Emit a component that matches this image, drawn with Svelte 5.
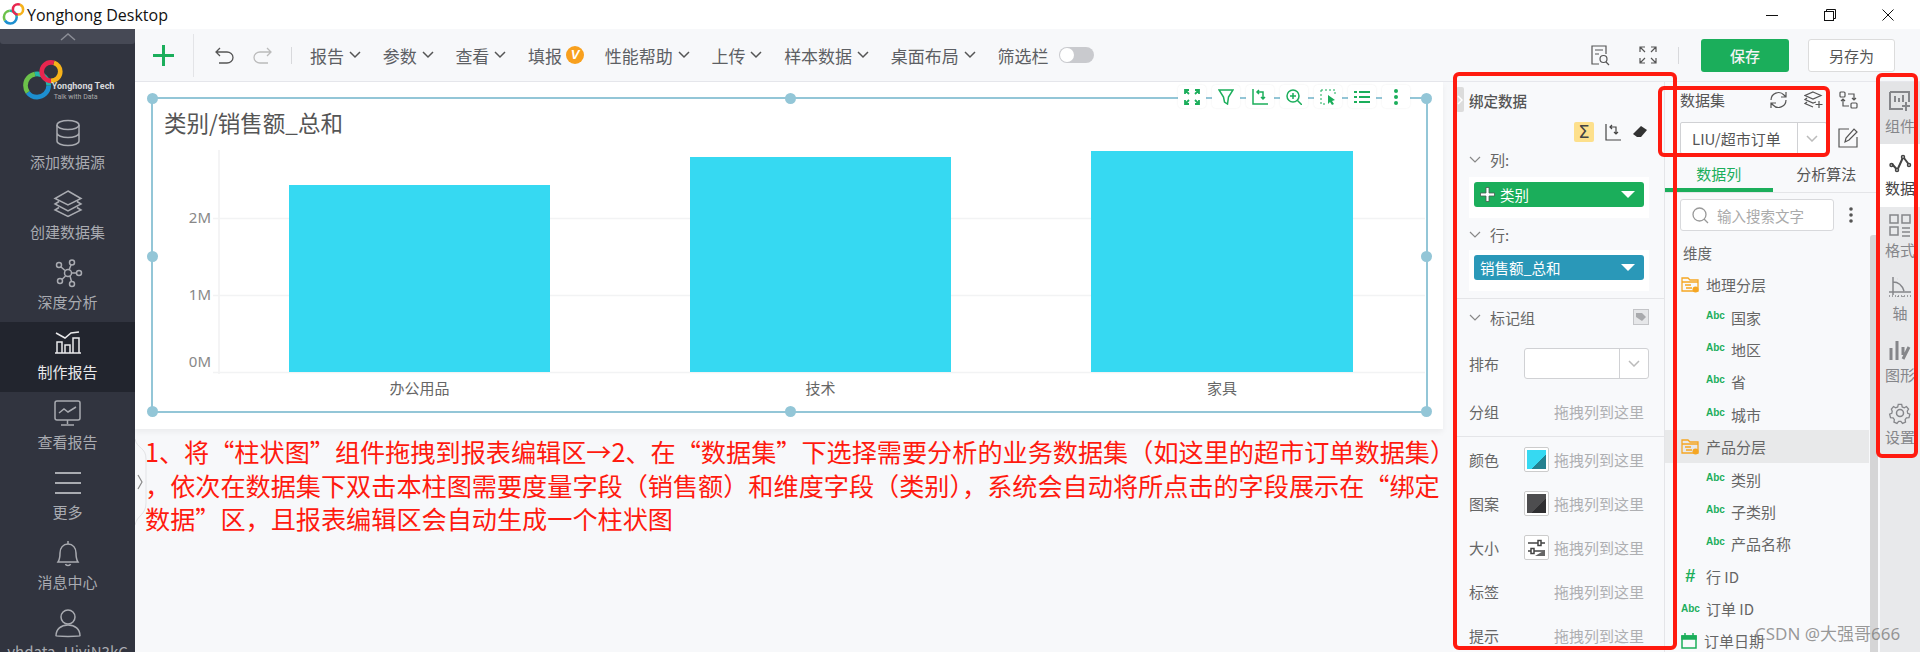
<script lang="ts">
  const ICONS: Record<string, string> = {
    db: '<ellipse cx="13" cy="6" rx="11" ry="4.5"/><path d="M2 6v16c0 2.5 5 4.5 11 4.5s11-2 11-4.5V6M2 14c0 2.5 5 4.5 11 4.5S24 16.5 24 14"/>',
    layers: '<path d="M14 2 27 9.5 14 16 1 9.5zM5 12.5 1 15l13 7 13-7-4-2.5M5 18.5 1 21l13 6.5L27 21l-4-2.5"/>',
    graph: '<circle cx="14" cy="14" r="3.5"/><circle cx="5" cy="6" r="2.5"/><circle cx="18" cy="3.5" r="2.5"/><circle cx="25" cy="14" r="2.5"/><circle cx="6" cy="22" r="2.5"/><circle cx="18" cy="25" r="2.5"/><path d="m7 8 4 3.5M17 6l-2 5M22.5 14H18M8 20.5l3.5-3.5M17.5 22.5 16 17"/>',
    report: '<path d="M1 23h26M3 23V12h5v11M11 23V15h5v8M19 23V8h6v15M2 3l9 5 6-5 8-1"/>',
    monitor: '<rect x="1" y="1" width="25" height="19" rx="2"/><path d="M5 13l5-4 4 3 8-5M13.5 20v4M7 25h13"/>',
    menu: '<path d="M1 2h26M1 12h26M1 22h26" stroke-width="2"/>',
    bell: '<path d="M4 22c2-3 2-5 2-9 0-5 3-9 8-9s8 4 8 9c0 4 0 6 2 9zM11.5 24c.5 2 4.5 2 5 0M14 4V1"/>',
    user: '<circle cx="14" cy="8" r="7"/><path d="M2 27c0-7 5-11 12-11s12 4 12 11c0 .5-24 .5-24 0z"/>',
    widget: '<path d="M6 5v6M10 7v4M14 4v7M1 1h19v10M14 18H1V1M17 11v9M13 15h8" stroke-width="2"/>',
    trend: '<circle cx="2.5" cy="12" r="1.5"/><circle cx="8" cy="17" r="1.5"/><circle cx="14" cy="4" r="1.5"/><circle cx="20" cy="12" r="1.5"/><path d="m3 11 4.5 5M9 15.5 13.5 5.5M15 5l4.5 6" stroke-width="2"/>',
    grid: '<rect x="1" y="1" width="8" height="8"/><rect x="13" y="1" width="8" height="8"/><rect x="1" y="13" width="8" height="8"/><path d="M13 14h8M13 18h8M13 22h8"/>',
    axis: '<path d="M4 0v18M0 15h22M4 5c5 0 9 3 11 9"/><path d="M0 19h22M8 2h.1M14 19v2M9 19v2" stroke-dasharray="1 2"/>',
    shape: '<path d="M2 8v12M8 1v19M14 7v8M20 7l-6 12" stroke-width="3"/>',
    gear: '<circle cx="11" cy="11" r="3.5"/><path d="M9 1h4l.6 3 2.4 1 2.5-1.5 2.5 3-1.5 2.5.5 2.5 2.5 1-1 4-3 .1-1.5 2.1.5 3-3.5 1.5-2-2.5h-2.5l-2 2.5-3.5-1.5.5-3-1.5-2.1-3-.1-1-4 2.5-1 .5-2.5L1 6.5l2.5-3L6 5l2.4-1z" transform="translate(1.5 1.5) scale(.86)"/>'
  };

  const navItems = [
    { label: "添加数据源", icon: "db", w: 26, h: 28 },
    { label: "创建数据集", icon: "layers", w: 28, h: 28 },
    { label: "深度分析", icon: "graph", w: 28, h: 28 },
    { label: "制作报告", icon: "report", w: 28, h: 26, active: true },
    { label: "查看报告", icon: "monitor", w: 27, h: 26 },
    { label: "更多", icon: "menu", w: 28, h: 24 },
    { label: "消息中心", icon: "bell", w: 28, h: 27 },
    { label: "yhdata_UiyiN3kC", icon: "user", w: 28, h: 28 }
  ];

  const menus = [
    { label: "报告", arrow: true },
    { label: "参数", arrow: true },
    { label: "查看", arrow: true },
    { label: "填报", badge: true },
    { label: "性能帮助", arrow: true },
    { label: "上传", arrow: true },
    { label: "样本数据", arrow: true },
    { label: "桌面布局", arrow: true }
  ];

  const railItems = [
    { label: "组件", icon: "widget", w: 22, h: 21, cls: "tinted" },
    { label: "数据", icon: "trend", w: 22, h: 20, cls: "on" },
    { label: "格式", icon: "grid", w: 22, h: 23 },
    { label: "轴", icon: "axis", w: 22, h: 22 },
    { label: "图形", icon: "shape", w: 22, h: 22 },
    { label: "设置", icon: "gear", w: 22, h: 22 }
  ];

  const fields = [
    { kind: "folder", name: "地理分层" },
    { kind: "abc", name: "国家" },
    { kind: "abc", name: "地区" },
    { kind: "abc", name: "省" },
    { kind: "abc", name: "城市" },
    { kind: "folder", name: "产品分层", hover: true },
    { kind: "abc", name: "类别" },
    { kind: "abc", name: "子类别" },
    { kind: "abc", name: "产品名称" },
    { kind: "hash", name: "行 ID" },
    { kind: "abc-top", name: "订单 ID" },
    { kind: "date", name: "订单日期" }
  ];

  // chart coords: plot bottom is y=226
  const bars = [
    { label: "办公用品", x: 136, w: 261, top: 39 },
    { label: "技术", x: 537, w: 261, top: 11 },
    { label: "家具", x: 938, w: 262, top: 5 }
  ];
  const ticks = [
    { label: "2M", y: 72, ty: 77 },
    { label: "1M", y: 149, ty: 154 },
    { label: "0M", y: 226, ty: 221 }
  ];
</script>

{#snippet icon(name: string, w: number, h: number)}
  <svg class="ico" width={w} height={h} viewBox="0 0 {w} {h}">{@html ICONS[name]}</svg>
{/snippet}

{#snippet rings(scale: number)}
  <svg width={36 * scale} height={36 * scale} viewBox="0 0 36 36" fill="none" stroke-width="4">
    <g transform="translate(13 22)">
      <circle r="10" stroke="#1d8fd0" pathLength="100" stroke-dasharray="40 60" />
      <circle r="10" stroke="#6cc24a" pathLength="100" stroke-dasharray="32 68" stroke-dashoffset="-40" />
      <circle r="10" stroke="#23b7a8" pathLength="100" stroke-dasharray="28 72" stroke-dashoffset="-72" />
    </g>
    <g transform="translate(25 10)">
      <circle r="8" stroke="#f6b21a" pathLength="100" stroke-dasharray="45 55" stroke-dashoffset="20" />
      <circle r="8" stroke="#e8264f" pathLength="100" stroke-dasharray="55 45" stroke-dashoffset="-25" />
    </g>
  </svg>
{/snippet}

{#snippet chevron(color: string)}
  <svg width="12" height="7" viewBox="0 0 12 7" fill="none" stroke={color} stroke-width="1.2"><path d="m1 1 5 5 5-5" /></svg>
{/snippet}

{#snippet dropRow(label: string, swatch = "")}
  <div class="drop-row">
    <span class="drop-label">{label}</span>
    {#if swatch}
      <span class="swatch">
        {#if swatch === "size"}
          <svg width="19" height="19" viewBox="0 0 19 19" fill="none" stroke="#444" stroke-width="1.5">
            <path d="M1 5h17M1 13h17" /><rect x="11" y="2.5" width="3" height="5" fill="#fff" /><rect x="4" y="10.5" width="3" height="5" fill="#fff" />
            <path d="M8 18l10-6v6z" fill="#666" stroke="none" />
          </svg>
        {:else}
          <span class="fill {swatch}"></span>
        {/if}
      </span>
    {/if}
    <span class="drop-hint">拖拽列到这里</span>
  </div>
{/snippet}

<div class="app">
  <header class="titlebar">
    {@render rings(0.64)}
    <span class="app-name">Yonghong Desktop</span>
    <div class="win-btns">
      <svg width="12" height="12" viewBox="0 0 12 12" fill="none" stroke="#111"><path d="M0 6.5h12" /></svg>
      <svg width="12" height="12" viewBox="0 0 12 12" fill="none" stroke="#111"><rect x=".5" y="2.5" width="9" height="9" /><path d="M2.5 2.5v-2h9v9h-2" /></svg>
      <svg width="12" height="12" viewBox="0 0 12 12" fill="none" stroke="#111"><path d="m.5.5 11 11M11.5.5l-11 11" /></svg>
    </div>
  </header>

  <div class="body">
    <nav class="sidebar">
      <div class="scroll-up">
        <svg width="16" height="8" viewBox="0 0 16 8" fill="none" stroke="#8b8d96" stroke-width="1.5"><path d="m1 7 7-6 7 6" /></svg>
      </div>
      <div class="brand">
        {@render rings(1.16)}
        <div class="brand-text">
          <b>Yonghong Tech</b>
          <small>Talk with Data</small>
        </div>
      </div>
      {#each navItems as item}
        <div class="nav-item" class:active={item.active}>
          {@render icon(item.icon, item.w, item.h)}
          <span>{item.label}</span>
        </div>
      {/each}
    </nav>

    <div class="main">
      <div class="toolbar">
        <svg class="plus" width="21" height="21" viewBox="0 0 21 21" fill="#1bae5b"><path d="M9 0h3v9h9v3h-9v9H9v-9H0V9h9z" /></svg>
        <span class="sep tall"></span>
        <svg class="undo" width="19" height="17" viewBox="0 0 19 17" fill="none" stroke="#555" stroke-width="1.3"><path d="M5 1 1 5l4 4M1 5h11c3 0 6 2 6 5.5S15 16 12 16H4" /></svg>
        <svg class="redo" width="19" height="17" viewBox="0 0 19 17" fill="none" stroke="#bbb" stroke-width="1.3"><path d="m14 1 4 4-4 4M18 5H7C4 5 1 7 1 10.5S4 16 7 16h8" /></svg>
        <span class="sep"></span>
        <div class="menus">
          {#each menus as m}
            <span class="menu">
              {m.label}
              {#if m.arrow}
                <svg width="14" height="8" viewBox="0 0 14 8" fill="none" stroke="#555" stroke-width="1.5"><path d="m2 1 5 5 5-5" /></svg>
              {/if}
              {#if m.badge}<i class="v-badge">V</i>{/if}
            </span>
          {/each}
          <span class="menu">筛选栏<span class="toggle"></span></span>
        </div>
        <div class="tool-right">
          <svg width="22" height="22" viewBox="0 0 22 22" fill="none" stroke="#555" stroke-width="1.2"><path d="M17 10V2H3v18h7M6 6h8M6 10h4" /><circle cx="14.5" cy="15" r="3.5" /><path d="m17 18 3 3" /></svg>
          <svg width="18" height="18" viewBox="0 0 18 18" fill="none" stroke="#555" stroke-width="1.2"><path d="M1 6V1h5M12 1h5v5M1 12v5h5M17 12v5h-5M1 1l5 5M17 1l-5 5M1 17l5-5M17 17l-5-5" /></svg>
          <span class="sep"></span>
          <button class="btn-save">保存</button>
          <button class="btn-saveas">另存为</button>
        </div>
      </div>

      <div class="workspace">
        <div class="canvas-col">
          <div class="canvas">
            <div class="widget">
              <h2>类别/销售额_总和</h2>
              <svg class="chart" width="1273" height="260" viewBox="0 0 1273 260">
                <path d="M66 4v224" stroke="#f0f1f2" stroke-width="1.5" />
                {#each ticks as t}
                  <path d="M60 {t.y + 0.5}H1272" stroke="#f2f3f4" stroke-width="1.5" />
                  <text x="58" y={t.ty} text-anchor="end" class="tick">{t.label}</text>
                {/each}
                {#each bars as b}
                  <rect x={b.x} y={b.top} width={b.w} height={226 - b.top} fill="#36d9f2" />
                  <text x={b.x + b.w / 2} y="248" text-anchor="middle" class="cat">{b.label}</text>
                {/each}
              </svg>
              <span class="handle tl"></span><span class="handle tc"></span><span class="handle tr"></span>
              <span class="handle ml"></span><span class="handle mr"></span>
              <span class="handle bl"></span><span class="handle bc"></span><span class="handle br"></span>

              <div class="chart-tools">
                <span><svg width="16" height="16" viewBox="0 0 16 16" fill="none" stroke="#1bae5b" stroke-width="1.8"><path d="M1 5V1h4M11 1h4v4M1 11v4h4M15 11v4h-4M2 2l3 3M14 2l-3 3M2 14l3-3M14 14l-3-3" /></svg></span>
                <span><svg width="16" height="16" viewBox="0 0 16 16" fill="none" stroke="#1bae5b" stroke-width="1.5"><path d="M1 1h14l-4.5 7-1 7-3-2-1-5z" /></svg></span>
                <span><svg width="16" height="16" viewBox="0 0 16 16" fill="none" stroke="#1bae5b" stroke-width="1.5"><path d="M1 0v15h15M5 3h6v7M9 8l2 2 2-2M7 1 5 3l2 2" /></svg></span>
                <span><svg width="16" height="16" viewBox="0 0 16 16" fill="none" stroke="#1bae5b" stroke-width="1.5"><circle cx="7" cy="7" r="6" /><path d="M4 7h6M7 4v6M11.5 11.5 16 16" /></svg></span>
                <span><svg width="16" height="16" viewBox="0 0 16 16" fill="none"><path d="M1 1h14v6M1 1v14h6" stroke="#1bae5b" stroke-dasharray="2 2" /><path d="m8 6 7 5-3 1 2 3-2 1-2-3-2 2z" fill="#1bae5b" /></svg></span>
                <span><svg width="16" height="12" viewBox="0 0 16 12" fill="none" stroke="#1bae5b" stroke-width="2"><path d="M0 1h3M5 1h11M0 6h3M5 6h11M0 11h3M5 11h11" /></svg></span>
                <span><svg width="6" height="16" viewBox="0 0 6 16" fill="#1bae5b"><circle cx="3" cy="2" r="2" /><circle cx="3" cy="8" r="2" /><circle cx="3" cy="14" r="2" /></svg></span>
              </div>
            </div>
          </div>
          <p class="note">
            1、将“柱状图”组件拖拽到报表编辑区→2、在“数据集”下选择需要分析的业务数据集（如这里的超市订单数据集）<br />
            ，依次在数据集下双击本柱图需要度量字段（销售额）和维度字段（类别），系统会自动将所点击的字段展示在“绑定<br />
            数据”区，且报表编辑区会自动生成一个柱状图
          </p>
          <svg class="side-tab" width="12" height="86" viewBox="0 0 12 86" fill="none">
            <path d="M0 0c2 10 11 8 11 20v44C11 76 2 76 0 86" stroke="#e2e3e6" />
            <path d="m3 36 4 7-4 7" stroke="#888" stroke-width="1.2" />
          </svg>
        </div>

        <aside class="bind-panel">
          <div class="bind-head">
            <span class="grab"><svg width="6" height="10" viewBox="0 0 6 10" fill="none" stroke="#fff" stroke-width="1.5"><path d="m1 1 4 4-4 4" /></svg></span>
            <b>绑定数据</b>
          </div>
          <div class="bind-tools">
            <span class="sigma">Σ</span>
            <svg width="16" height="17" viewBox="0 0 16 17" fill="none" stroke="#444" stroke-width="1.2"><path d="M1 0v16h15M5 3h6v7M9 8l2 2 2-2M7 1 5 3l2 2" /></svg>
            <svg width="15" height="12" viewBox="0 0 15 12" fill="#333"><path d="M9 0l6 4-6 7H5L1 8z" /></svg>
          </div>
          <div class="section-label">{@render chevron("#888")}列:</div>
          <div class="pill-box">
            <div class="pill green">
              <svg class="pill-plus" width="15" height="15" viewBox="0 0 15 15" fill="#fff" stroke="#4a5a50" stroke-width=".8"><path d="M6 .5h3v5.500h5.500v3H9v5.500H6V9H.5V6H6z" /></svg>
              类别<i></i>
            </div>
          </div>
          <div class="section-label next">{@render chevron("#888")}行:</div>
          <div class="pill-box"><div class="pill blue">销售额_总和<i></i></div></div>
          <hr />
          <div class="mark-head">
            {@render chevron("#888")}
            标记组
            <svg class="tag" width="16" height="16" viewBox="0 0 16 16"><rect x=".5" y=".5" width="15" height="15" fill="#e6e7e9" stroke="#c4c5c8" /><path d="M3 4h6l4 4-4 4-6-4z" fill="#a9aaad" /></svg>
          </div>
          <div class="layout-row">
            <span class="drop-label">排布</span>
            <span class="select"><span></span><svg width="12" height="7" viewBox="0 0 12 7" fill="none" stroke="#bbb" stroke-width="1.5"><path d="m1 1 5 5 5-5" /></svg></span>
          </div>
          {@render dropRow("分组")}
          <hr class="tight" />
          {@render dropRow("颜色", "cyan")}
          {@render dropRow("图案", "dark")}
          {@render dropRow("大小", "size")}
          {@render dropRow("标签")}
          {@render dropRow("提示")}
        </aside>

        <section class="data-panel">
          <div class="ds-head">
            数据集
            <span class="ds-icons">
              <svg width="19" height="18" viewBox="0 0 19 18" fill="none" stroke="#555" stroke-width="1.2"><path d="M2 9a7.5 7.5 0 0 1 13-5l2 2M17 1v5h-5M17 9a7.5 7.5 0 0 1-13 5l-2-2M2 17v-5h5" /></svg>
              <svg width="19" height="18" viewBox="0 0 19 18" fill="none" stroke="#555" stroke-width="1.2"><path d="M9 1l8 3.5L9 8 1 4.5zM3 7 1 8.5 9 12l3-1M3 11l-2 1.5L9 16M15 10v7M11.5 13.5h7" /></svg>
              <svg width="19" height="18" viewBox="0 0 19 18" fill="none" stroke="#555" stroke-width="1.2"><rect x="1" y="1" width="5" height="5" rx="1" /><rect x="12" y="12" width="6" height="5" rx="1" /><path d="M9 3h6v6M13 7l2 2 2-2M10 15H4V8M2 10l2-2 2 2" /></svg>
            </span>
          </div>
          <div class="ds-select-row">
            <span class="select ds"><span>LIU/超市订单</span><svg width="12" height="7" viewBox="0 0 12 7" fill="none" stroke="#bbb" stroke-width="1.5"><path d="m1 1 5 5 5-5" /></svg></span>
            <svg width="20" height="20" viewBox="0 0 20 20" fill="none" stroke="#555" stroke-width="1.2"><path d="M11 1H1v18h18V9M7 14l1-4 8-9 3 3-8 8z" /></svg>
          </div>
          <div class="tabs"><span class="tab sel">数据列</span><span class="tab">分析算法</span></div>
          <div class="search-row">
            <span class="search">
              <svg width="17" height="17" viewBox="0 0 17 17" fill="none" stroke="#999" stroke-width="1.3"><circle cx="7.5" cy="7.5" r="6.5" /><path d="m12 12 4 4" /></svg>
              输入搜索文字
            </span>
            <svg width="4" height="16" viewBox="0 0 4 16" fill="#555"><circle cx="2" cy="2" r="1.8" /><circle cx="2" cy="8" r="1.8" /><circle cx="2" cy="14" r="1.8" /></svg>
          </div>
          <div class="dim-title">维度</div>
          <div class="field-list">
            {#each fields as f}
              <div class="field k-{f.kind}" class:hover={f.hover}>
                {#if f.kind === "folder"}
                  <svg width="18" height="16" viewBox="0 0 18 16" fill="none" stroke="#f5a623" stroke-width="1.3"><path d="M1 14V1h6l2 2h8v11zM1 5h16M4 8h6M5 11h6" /><circle cx="14.5" cy="12.5" r="3" fill="#f5a623" stroke="none" /></svg>
                {:else if f.kind === "abc" || f.kind === "abc-top"}
                  <b class="abc">Abc</b>
                {:else if f.kind === "hash"}
                  <b class="hash">#</b>
                {:else}
                  <svg width="16" height="16" viewBox="0 0 16 16" fill="none" stroke="#1bae5b" stroke-width="1.5"><path d="M1 3h14v12H1z" /><path d="M1 3h14v3H1zM4 0v3M12 0v3" fill="#1bae5b" /></svg>
                {/if}
                <span>{f.name}</span>
              </div>
            {/each}
          </div>
          <span class="scrollbar"></span>
        </section>

        <div class="rail">
          {#each railItems as r}
            <div class="rail-item {r.cls ?? ''}">
              {@render icon(r.icon, r.w, r.h)}
              <span>{r.label}</span>
            </div>
          {/each}
        </div>
      </div>
    </div>
  </div>

  <!-- annotations drawn over the screenshot -->
  <span class="mark m1"></span>
  <span class="mark m2"></span>
  <span class="mark m3"></span>
  <span class="watermark">CSDN @大强哥666</span>
</div>

<style>
  :global(body) {
    margin: 0;
    background: #fff;
  }

  .app {
    position: relative;
    width: 1920px;
    height: 652px;
    overflow: hidden;
    display: flex;
    flex-direction: column;
    font-family: "Noto Sans CJK SC", "Noto Sans", sans-serif;
    color: #555;
  }

  .titlebar {
    flex: none;
    height: 29px;
    display: flex;
    align-items: center;
    padding-left: 2px;
    gap: 2px;
    background: #fff;
  }
  .app-name {
    font-family: "Open Sans", sans-serif;
    font-size: 16px;
    color: #111;
  }
  .win-btns {
    margin-left: auto;
    display: flex;
    gap: 46px;
    padding-right: 26px;
  }

  .body {
    flex: 1;
    min-height: 0;
    display: flex;
  }

  .ico {
    fill: none;
    stroke: currentColor;
    stroke-width: 1.5;
    overflow: visible;
  }

  /* Left nav */
  .sidebar {
    flex: none;
    width: 135px;
    background: #31343f;
    color: #a9abb1;
    display: flex;
    flex-direction: column;
    overflow: hidden;
  }
  .scroll-up {
    height: 15px;
    flex: none;
    background: #464955;
    border-radius: 0 0 3px 3px;
    display: flex;
    justify-content: center;
    align-items: center;
  }
  .brand {
    height: 68px;
    flex: none;
    display: flex;
    align-items: center;
    padding: 6px 0 0 22px;
    box-sizing: border-box;
  }
  .brand-text {
    display: flex;
    flex-direction: column;
    margin: 22px 0 0 -12px;
    color: #d8d9dc;
    line-height: 11px;
  }
  .brand-text b {
    font-family: "Roboto", sans-serif;
    font-size: 9px;
    white-space: nowrap;
  }
  .brand-text small {
    font-family: "Roboto", sans-serif;
    font-size: 7px;
    color: #aaa;
    margin-left: 2px;
  }
  .nav-item {
    flex: none;
    height: 70px;
    box-sizing: border-box;
    display: grid;
    grid-template-rows: 28px 22px;
    gap: 4px;
    justify-items: center;
    align-items: center;
    padding-top: 7px;
  }
  .nav-item span {
    font-size: 15px;
    line-height: 22px;
    white-space: nowrap;
  }
  .nav-item.active {
    background: #22252e;
    color: #e9e9eb;
  }

  .main {
    flex: 1;
    min-width: 0;
    display: flex;
    flex-direction: column;
  }

  /* Toolbar */
  .toolbar {
    flex: none;
    height: 53px;
    box-sizing: border-box;
    display: flex;
    align-items: center;
    background: #f7f8fa;
    border-bottom: 1px solid #e6e7ec;
    padding-left: 18px;
  }
  .sep {
    width: 1px;
    height: 17px;
    background: #d8d9dc;
    flex: none;
  }
  .sep.tall {
    height: 43px;
    margin-left: 19px;
    background: #e3e4e7;
  }
  .undo {
    margin-left: 21px;
  }
  .redo {
    margin-left: 19px;
  }
  .redo + .sep {
    margin-left: 19px;
  }
  .menus {
    display: flex;
    align-items: center;
    gap: 20.7px;
    margin-left: 18px;
  }
  .menu {
    display: flex;
    align-items: center;
    gap: 4px;
    font-size: 17px;
    color: #5d5f64;
    white-space: nowrap;
  }
  .v-badge {
    width: 18px;
    height: 18px;
    border-radius: 50%;
    background: #f8a01e;
    color: #fff;
    font: italic 700 13px/18px "Liberation Sans", sans-serif;
    text-align: center;
  }
  .toggle {
    position: relative;
    width: 35px;
    height: 16px;
    margin-left: 6px;
    border-radius: 8px;
    background: #c9cace;
  }
  .toggle::before {
    content: "";
    position: absolute;
    left: 1px;
    top: 1px;
    width: 14px;
    height: 14px;
    border-radius: 50%;
    background: #fff;
  }
  .tool-right {
    margin-left: auto;
    display: flex;
    align-items: center;
    padding-right: 25px;
  }
  .tool-right > svg:nth-child(2) {
    margin-left: 28px;
  }
  .tool-right .sep {
    margin: 0 22px 0 21px;
  }
  .btn-save,
  .btn-saveas {
    height: 33px;
    border-radius: 3px;
    font-family: inherit;
    font-size: 15px;
    padding: 0;
  }
  .btn-save {
    width: 88px;
    background: #1bae5b;
    border: 0;
    color: #f3f3f3;
    font-weight: 500;
  }
  .btn-saveas {
    width: 87px;
    margin-left: 19px;
    background: #fff;
    border: 1px solid #dcdcdc;
    color: #555;
  }

  .workspace {
    flex: 1;
    min-height: 0;
    display: flex;
  }

  /* Canvas */
  .canvas-col {
    position: relative;
    flex: none;
    width: 1318px;
    background: #f7f8fa;
  }
  .canvas {
    width: 1308px;
    height: 347px;
    box-sizing: border-box;
    padding: 15px 15px 0 16px;
    background: #fff;
    box-shadow: 0 3px 6px rgba(0, 0, 0, 0.05);
  }
  .widget {
    position: relative;
    height: 316px;
    box-sizing: border-box;
    border: 2px solid #93c6d7;
  }
  .widget h2 {
    margin: 0;
    padding: 7px 0 0 11px;
    height: 47px;
    box-sizing: border-box;
    font-size: 22.5px;
    font-weight: 400;
    line-height: 32px;
    color: #555;
  }
  .chart {
    display: block;
  }
  .tick {
    font: 15px "Noto Sans", sans-serif;
    fill: #888;
  }
  .cat {
    font: 15px "Noto Sans CJK SC", sans-serif;
    fill: #666;
  }
  .handle {
    position: absolute;
    width: 11px;
    height: 11px;
    border-radius: 50%;
    background: #93c6d7;
  }
  .tl, .tc, .tr { top: -6px; }
  .ml, .mr { top: 152px; }
  .bl, .bc, .br { bottom: -6px; }
  .tl, .ml, .bl { left: -6px; }
  .tc, .bc { left: 632px; }
  .tr, .mr, .br { right: -6px; }
  .chart-tools {
    position: absolute;
    top: -14px;
    right: 16px;
    display: flex;
    gap: 6px;
  }
  .chart-tools span {
    width: 28px;
    height: 23px;
    border-radius: 4px;
    background: #fff;
    box-shadow: 0 0 2px rgba(0, 0, 0, 0.08);
    display: flex;
    align-items: center;
    justify-content: center;
  }
  .note {
    margin: 6px 0 0 10px;
    width: 1310px;
    font-size: 25.15px;
    line-height: 33.5px;
    color: #ff1a0f;
    white-space: nowrap;
  }
  .side-tab {
    position: absolute;
    left: 0;
    top: 357px;
  }

  /* Binding panel */
  .bind-panel {
    flex: none;
    width: 212px;
    box-sizing: border-box;
    padding: 0 15px 0 16px;
    background: #f8f9fb;
    border-right: 1px solid #e4e5e8;
    position: relative;
  }
  .bind-head {
    height: 40px;
    display: flex;
    align-items: center;
    font-size: 14.5px;
    padding-bottom: 4px;
    box-sizing: border-box;
  }
  .bind-head b {
    font-weight: 500;
    color: #555;
  }
  .grab {
    position: absolute;
    left: 3px;
    top: 5px;
    width: 8px;
    height: 25px;
    background: #dcdcdc;
    border-radius: 2px;
    display: flex;
    align-items: center;
    justify-content: center;
  }
  .bind-tools {
    display: flex;
    justify-content: flex-end;
    align-items: center;
    gap: 11px;
    height: 20px;
    margin-right: 2px;
  }
  .sigma {
    width: 20px;
    height: 20px;
    border-radius: 2px;
    background: #fde08c;
    font: 18px/20px "DejaVu Sans", sans-serif;
    text-align: center;
    color: #444;
  }
  .section-label {
    display: flex;
    align-items: center;
    gap: 9px;
    height: 35px;
    font-size: 15px;
    color: #666;
  }
  .section-label.next {
    height: 32px;
  }
  .pill-box {
    height: 41px;
    box-sizing: border-box;
    padding: 5px;
    background: #fff;
  }
  .pill {
    position: relative;
    height: 25px;
    border-radius: 3px;
    padding-left: 6px;
    font-size: 14.5px;
    line-height: 25px;
    color: #fff;
    display: flex;
    align-items: center;
  }
  .pill i {
    position: absolute;
    right: 9px;
    top: 9px;
    border: 7px solid transparent;
    border-top: 7px solid #fff;
    border-bottom: 0;
  }
  .pill.green { background: #1bae5b; }
  .pill.blue { background: #2a98b8; }
  .pill-plus {
    margin-right: 5px;
  }
  .bind-panel hr {
    margin: 7px -16px 0;
    border: 0;
    border-top: 1px solid #e4e5e8;
  }
  .bind-panel hr.tight {
    margin-top: 5px;
  }
  .mark-head {
    display: flex;
    align-items: center;
    gap: 9px;
    height: 36px;
    font-size: 15px;
    color: #666;
  }
  .tag {
    margin-left: auto;
  }
  .layout-row {
    display: flex;
    align-items: center;
    justify-content: space-between;
    height: 32px;
    margin-top: 12px;
  }
  .select {
    display: flex;
    align-items: center;
    box-sizing: border-box;
    width: 131px;
    height: 31px;
    background: #fff;
    border: 1px solid #d0d1d4;
    border-radius: 3px;
  }
  .select span {
    flex: 1;
    align-self: stretch;
    border-right: 1px solid #d0d1d4;
    display: flex;
    align-items: center;
    padding-left: 11px;
    font-size: 15px;
    white-space: nowrap;
  }
  .select svg {
    margin: 0 8px;
  }
  .drop-row {
    display: flex;
    align-items: center;
    height: 44px;
    font-size: 15px;
  }
  .layout-row + .drop-row {
    height: 40px;
    margin-top: 12px;
  }
  .drop-label {
    width: 55px;
    flex: none;
    font-size: 15px;
    color: #666;
  }
  .drop-hint {
    margin-left: auto;
    margin-right: 5px;
    color: #aeafb2;
    white-space: nowrap;
  }
  .swatch {
    width: 25px;
    height: 25px;
    box-sizing: border-box;
    background: #fff;
    border: 1px solid #ccc;
    border-radius: 2px;
    display: flex;
    align-items: center;
    justify-content: center;
  }
  .fill {
    width: 19px;
    height: 19px;
  }
  .fill.cyan { background: linear-gradient(135deg, #36d9f2 62%, #24808f 62%); }
  .fill.dark { background: linear-gradient(135deg, #4d4d4f 62%, #2f2f31 62%); }

  /* Data panel */
  .data-panel {
    position: relative;
    flex: none;
    width: 215px;
    box-sizing: border-box;
    background: #f8f9fb;
    overflow: hidden;
  }
  .ds-head {
    height: 40px;
    display: flex;
    align-items: center;
    padding: 0 22px 5px 15px;
    box-sizing: border-box;
    font-size: 15px;
  }
  .ds-icons {
    margin-left: auto;
    display: flex;
    gap: 16px;
  }
  .ds-select-row {
    display: flex;
    align-items: center;
    gap: 11px;
    padding-left: 15px;
  }
  .select.ds {
    width: 147px;
    height: 32px;
    border-radius: 2px;
  }
  .tabs {
    display: flex;
    height: 39px;
    border-bottom: 1px solid #e4e5e8;
    font-size: 15px;
    box-sizing: border-box;
  }
  .tab {
    flex: 1;
    text-align: center;
    line-height: 39px;
  }
  .tab.sel {
    color: #1bae5b;
    box-shadow: inset 0 -4px 0 #1bae5b;
  }
  .search-row {
    display: flex;
    align-items: center;
    padding: 6px 0 0 15px;
    gap: 15px;
  }
  .search {
    box-sizing: border-box;
    width: 154px;
    height: 32px;
    background: #fff;
    border: 1px solid #d8d9dc;
    border-radius: 3px;
    display: flex;
    align-items: center;
    gap: 8px;
    padding-left: 11px;
    font-size: 14.5px;
    color: #aaa;
  }
  .dim-title {
    padding-left: 18px;
    font-size: 14.5px;
    line-height: 22px;
    margin-top: 11px;
    color: #666;
  }
  .field-list {
    margin-top: 4.5px;
    margin-right: 11px;
  }
  .field {
    height: 32.4px;
    display: flex;
    align-items: center;
    gap: 7px;
    padding-left: 16px;
    font-size: 15px;
    color: #666;
    white-space: nowrap;
  }
  .field.k-abc {
    padding-left: 41px;
  }
  .field.hover {
    background: #e8e9ea;
  }
  .abc {
    width: 18px;
    flex: none;
    font: 700 10px/12px "Liberation Sans", sans-serif;
    color: #1bae5b;
  }
  .field.k-abc .abc {
    margin-top: -3px;
  }
  .hash {
    width: 18px;
    text-align: center;
    font: italic 700 18px/18px "Liberation Sans", sans-serif;
    color: #1bae5b;
  }
  .scrollbar {
    position: absolute;
    right: 2px;
    top: 153px;
    bottom: 0;
    width: 8px;
    background: #d5d5d6;
    border-radius: 3px 0 0 0;
  }

  /* Right rail */
  .rail {
    flex: 1;
    background: #e8e9eb;
    color: #85868a;
  }
  .rail-item {
    height: 62.4px;
    box-sizing: border-box;
    display: grid;
    grid-template-rows: 22px 22px;
    gap: 2.5px;
    justify-items: center;
    align-items: center;
    padding-top: 8px;
  }
  .rail-item span {
    font-size: 15px;
    line-height: 22px;
    white-space: nowrap;
  }
  .rail-item.on {
    background: #fff;
    color: #444;
  }
  .rail-item.tinted {
    background: #e3e4e6;
  }

  /* Red boxes from the annotated screenshot */
  .mark {
    position: absolute;
    box-sizing: border-box;
    border: 4px solid #ff1a0f;
    border-radius: 6px;
  }
  .m1 { left: 1453px; top: 72px; width: 224px; height: 578px; }
  .m2 { left: 1658px; top: 86px; width: 172px; height: 71px; }
  .m3 { left: 1876px; top: 73px; width: 42px; height: 385px; }
  .watermark {
    position: absolute;
    left: 1755px;
    top: 622px;
    font-family: "Noto Sans", "Noto Sans CJK SC", sans-serif;
    font-size: 17px;
    line-height: 24px;
    color: rgba(120, 120, 120, 0.75);
    white-space: nowrap;
  }
</style>
